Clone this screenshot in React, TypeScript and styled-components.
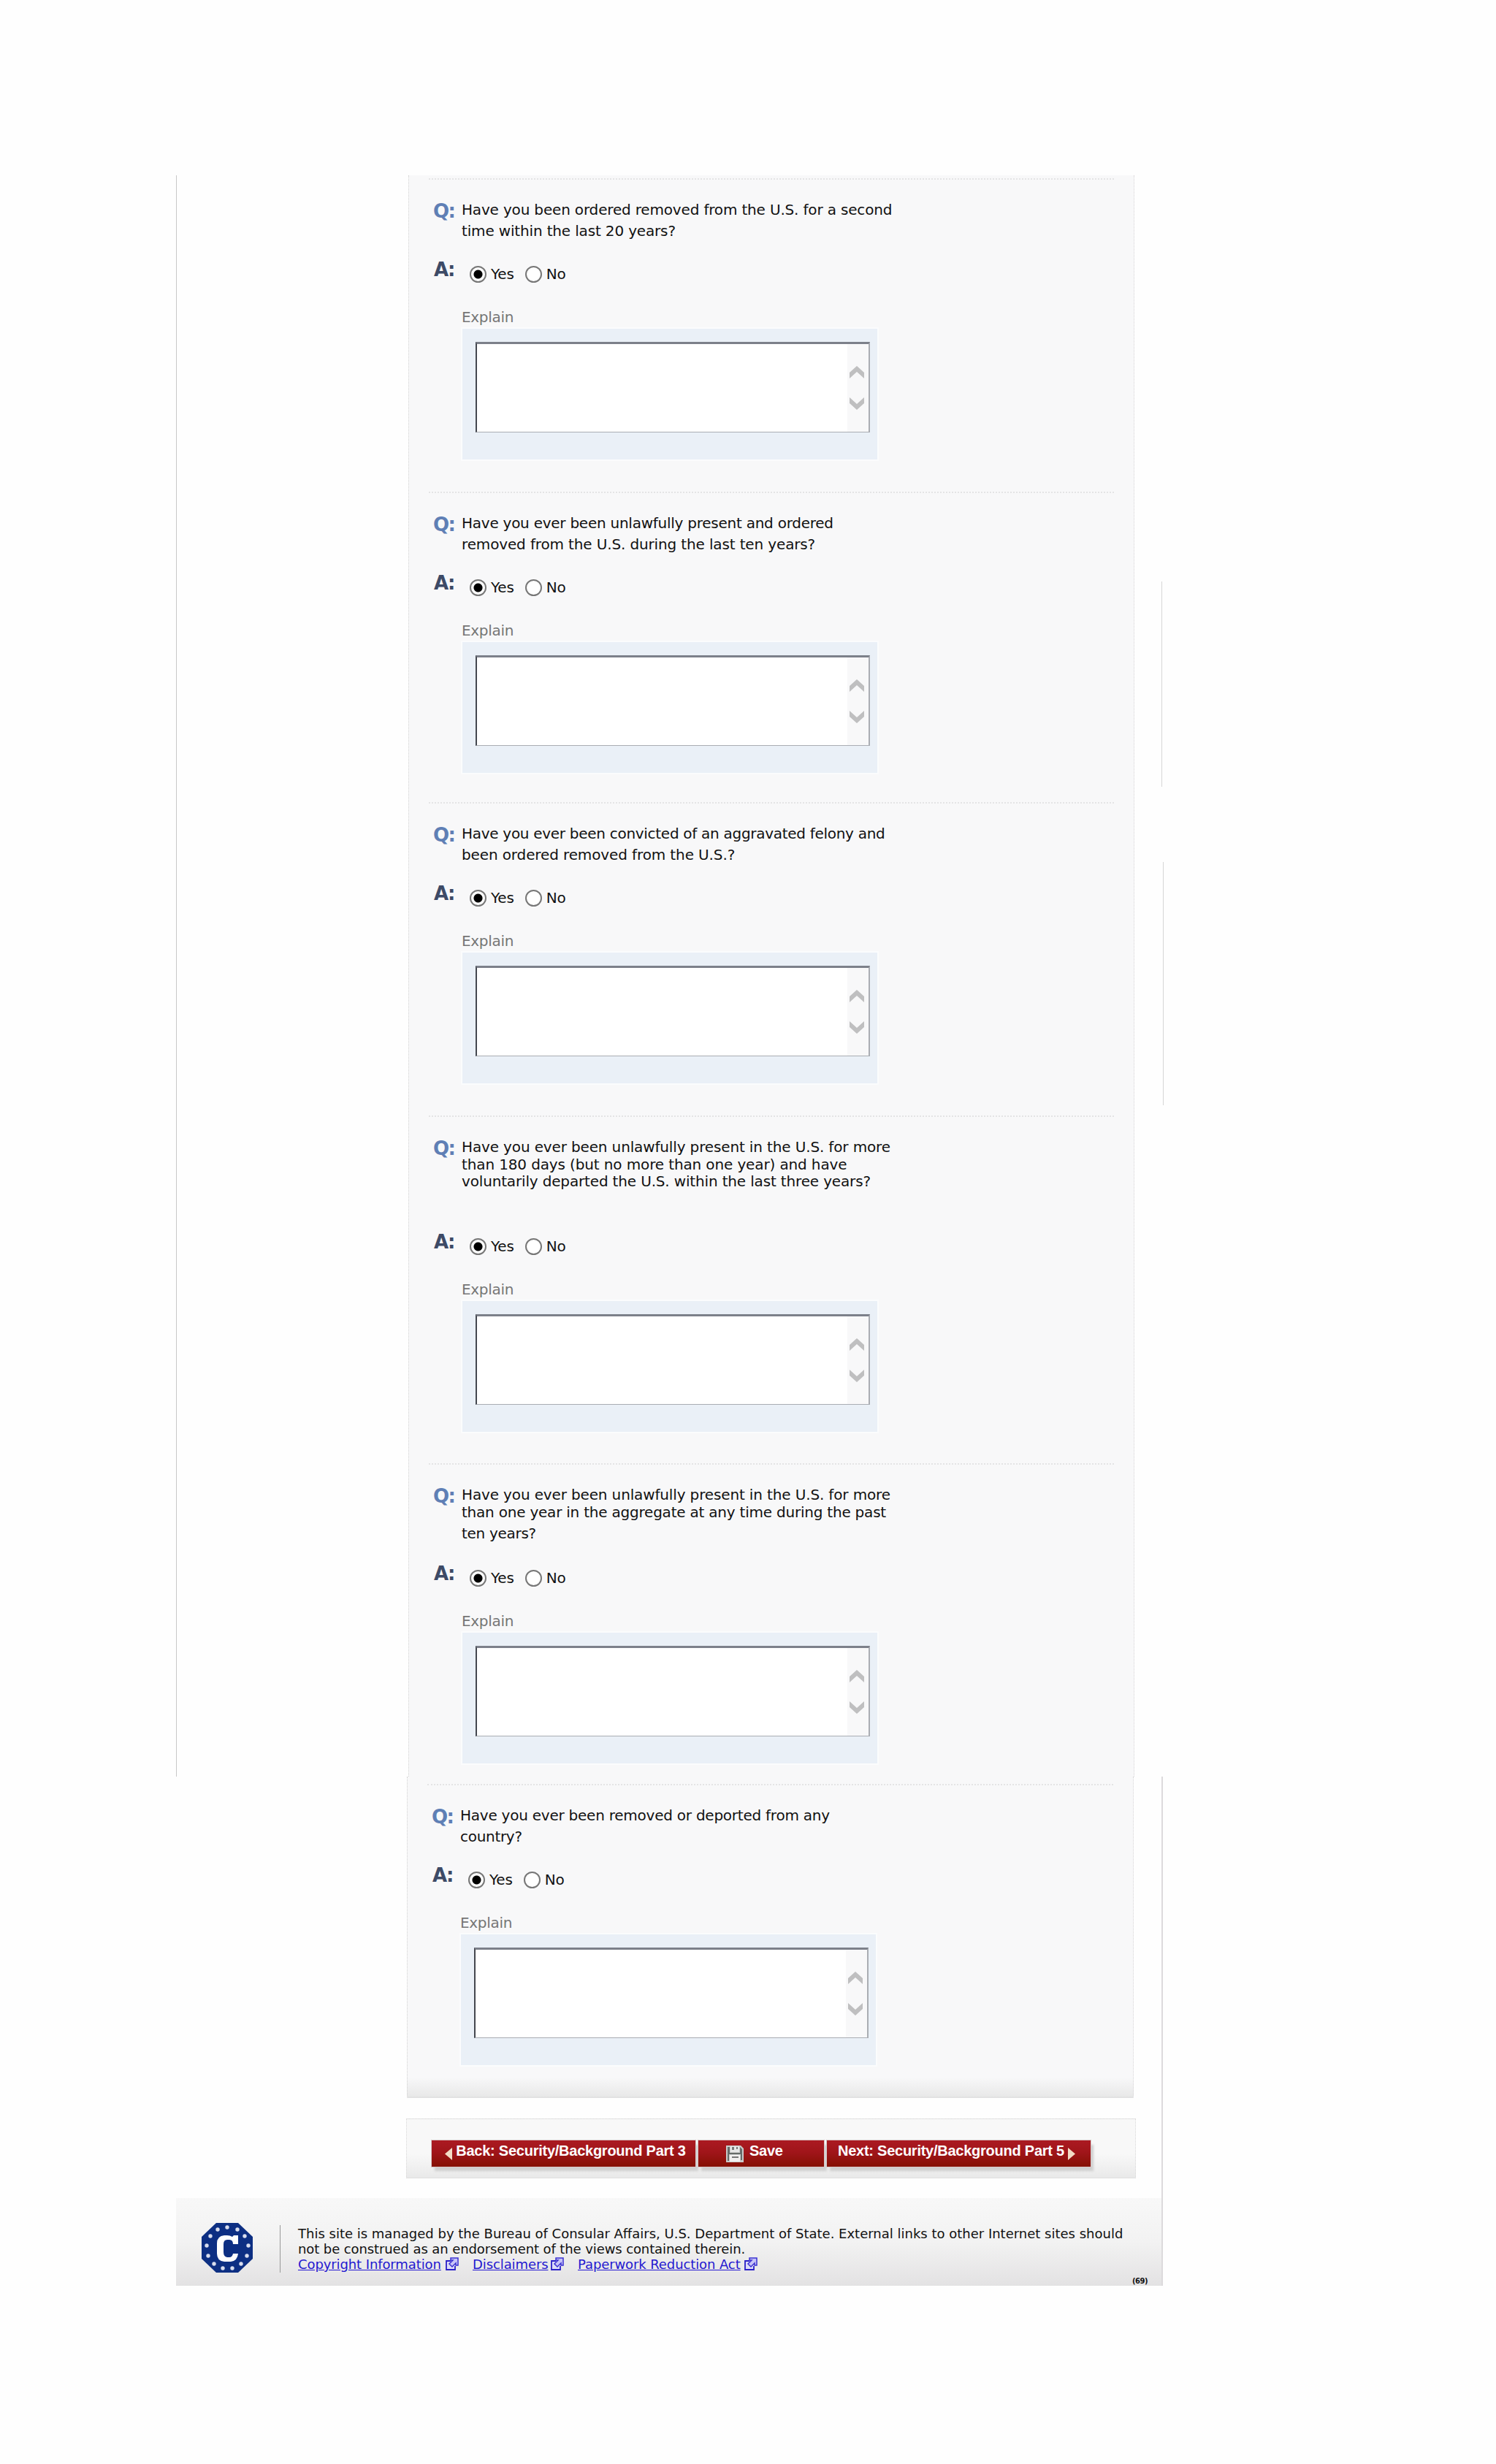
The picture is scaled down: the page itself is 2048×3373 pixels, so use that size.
import { Fragment, useState } from 'react';
import styled, { createGlobalStyle } from 'styled-components';

const GlobalStyle = createGlobalStyle`
  * {
    box-sizing: border-box;
  }

  body {
    margin: 0;
    background: #fff;
    color: #111;
    font-family: Verdana, "DejaVu Sans", sans-serif;
  }
`;

//#region Page
const Page = styled.div`
  width: 2048px;
  height: 3373px;
  padding-top: 240px;
  background: #fefefe;
  overflow: hidden;
`;

const Upper = styled.div`
  display: flex;
  height: 2192px;
  margin-left: 241px;
  border-left: 1px solid #c8c8c8;
`;

const Lower = styled.div`
  display: flex;
  flex-direction: column;
  width: 1351px;
  height: 697px;
  margin-left: 241px;
  border-right: 2px solid #dcdadc;
`;

const Rail = styled.div`
  display: flex;
  flex-direction: column;
  width: 3px;
  margin-left: 37px;
`;

const RailLine = styled.div<{ $top: number; $height: number; $shift?: number }>`
  width: 1px;
  height: ${(p) => p.$height}px;
  margin-top: ${(p) => p.$top}px;
  margin-left: ${(p) => p.$shift || 0}px;
  background: #d6d6d6;
`;

const Panel = styled.div<{ $left: number; $last?: boolean }>`
  flex: none;
  width: ${(p) => (p.$last ? 995 : 994)}px;
  height: ${(p) => (p.$last ? '440px' : 'auto')};
  margin-left: ${(p) => p.$left}px;
  padding: ${(p) => (p.$last ? '10px' : '4px')} 27px 0;
  border-left: 1px dotted #d2d2d2;
  border-right: 1px dotted #d8d6d8;
  border-bottom: ${(p) => (p.$last ? '2px solid #e2e2e2' : 'none')};
  background: ${(p) => (p.$last ? 'linear-gradient(#f8f8f9 94%, #e8e8e8)' : '#f8f8f9')};
`;
//#endregion

//#region Question
const Section = styled.section<{ $height: number }>`
  height: ${(p) => p.$height}px;
  padding-left: 6px;
  border-top: 2px dotted #e4e4e5;
`;

const QuestionRow = styled.div<{ $height: number }>`
  display: flex;
  height: ${(p) => p.$height}px;
  padding-top: 28px;
`;

const Mark = styled.div<{ $answer?: boolean }>`
  width: 39px;
  padding-left: ${(p) => (p.$answer ? 1 : 0)}px;
  color: ${(p) => (p.$answer ? '#3d4a66' : '#5f7fb5')};
  font-family: "DejaVu Sans", sans-serif;
  font-size: 26px;
  font-weight: bold;
  line-height: 30px;
  letter-spacing: -1.6px;
`;

const QuestionText = styled.div`
  padding-top: 1px;
  font-size: 20px;
  white-space: nowrap;
`;

const QuestionLine = styled.div<{ $height: number; $spacing: number }>`
  height: ${(p) => p.$height}px;
  line-height: 24px;
  letter-spacing: ${(p) => p.$spacing}px;
`;

const AnswerRow = styled.div`
  display: flex;
  height: 73px;
`;

const Option = styled.label`
  display: flex;
  align-items: center;
  height: 24px;
  margin: 9px 15px 0 0;
  font-size: 20px;
  letter-spacing: -0.2px;
`;

const Options = styled.div`
  display: flex;
  padding-left: 11px;
`;

const Radio = styled.input`
  appearance: none;
  width: 23px;
  height: 23px;
  margin: 0 6px 0 0;
  border: 2px solid #777;
  border-radius: 50%;
  background: #fff;

  &:checked {
    background: radial-gradient(circle, #000 5.5px, #fff 6.5px);
  }
`;

const Explain = styled.div`
  margin-left: 39px;
`;

const ExplainLabel = styled.div`
  height: 23px;
  color: #767676;
  font-size: 20px;
  line-height: 15px;
  letter-spacing: -0.3px;
`;

const ExplainBox = styled.div`
  width: 568px;
  height: 179px;
  margin-left: 1px;
  padding: 18px 0 0 18px;
  background: #eaf0f7;
  box-shadow: 0 0 0 2px #fbfcfd;
`;

const Field = styled.div`
  display: flex;
  width: 540px;
  height: 124px;
  border: 1px solid #aaadb3;
  border-top: 3px solid #7c808a;
  border-left: 2px solid #44474f;
  border-right-width: 2px;
  background: #fff;
`;

const TextArea = styled.textarea`
  flex: 1;
  border: none;
  outline: none;
  resize: none;
  background: transparent;
  font: inherit;
`;

const Scroller = styled.div`
  width: 29px;
  background: #f8f8f9;
`;
//#endregion

//#region Buttons
const ButtonBar = styled.div`
  display: flex;
  gap: 4px;
  width: 999px;
  height: 82px;
  margin: 28px 0 0 315px;
  padding: 29px 0 0 34px;
  border: 1px dotted #d8d8d8;
  border-bottom: 1px solid #e0e0e0;
  background: linear-gradient(#f8f8f8 60%, #e9e9e9);
`;

const NavButton = styled.button<{ $width: number; $pad: number }>`
  display: flex;
  align-items: center;
  width: ${(p) => p.$width}px;
  height: 36px;
  padding: 0 0 0 ${(p) => p.$pad}px;
  border: none;
  background: linear-gradient(#ab1a22, #a0151a 45%, #851003);
  box-shadow: 0 0 0 1px #d9c9c9, 4px 6px 3px #cfcfcf;
  color: #fff;
  font-family: Arial, "Liberation Sans", sans-serif;
  font-size: 20px;
  font-weight: bold;
  white-space: nowrap;
`;

const ButtonText = styled.span`
  padding-bottom: 8px;
  letter-spacing: -0.25px;
`;
//#endregion

//#region Footer
const Footer = styled.footer`
  display: flex;
  height: 120px;
  margin-top: 27px;
  padding-left: 35px;
  background: linear-gradient(#f8f8f8, #f2f2f2 50%, #e3e2e3);
`;

const FooterText = styled.div`
  width: 1141px;
  height: 65px;
  margin: 37px 0 0 37px;
  padding: 1px 0 0 24px;
  border-left: 1px solid #999;
  font-size: 18px;
  line-height: 21px;
  white-space: nowrap;
`;

const FooterLine = styled.div<{ $spacing: number }>`
  letter-spacing: ${(p) => p.$spacing}px;
`;

const Links = styled.div`
  display: flex;
`;

const FooterLink = styled.a<{ $width: number }>`
  width: ${(p) => p.$width}px;
  color: #2418d0;
  letter-spacing: -0.1px;
  text-decoration: underline;
`;

const PageCode = styled.div`
  align-self: flex-end;
  margin-left: 26px;
  font-size: 10px;
  font-weight: bold;
  line-height: 12px;
  letter-spacing: -0.5px;
`;
//#endregion

//#region Icons
const Chevrons = () => (
  <svg width="29" height="120" viewBox="0 0 29 120">
    <path d="M3 39 L13 30 L23 39 V47 L13 38 L3 47Z M3 73 L13 82 L23 73 V81 L13 90 L3 81Z" fill="#bfbfc0" />
  </svg>
);

const ArrowSvg = styled.svg`
  flex: none;
  margin-top: 1px;
`;

const Arrow = ({ right = false }) => (
  <ArrowSvg width="10" height="17" viewBox="0 0 10 17">
    <path d={right ? 'M0 0 L10 8.5 L0 17Z' : 'M10 0 L0 8.5 L10 17Z'} fill="#f3dcc6" />
  </ArrowSvg>
);

const FloppySvg = styled.svg`
  flex: none;
  margin-right: 8px;
`;

const Floppy = () => (
  <FloppySvg width="24" height="23" viewBox="0 0 24 23">
    <path d="M0 0 H20 L24 4 V23 H0Z" fill="#c9cac9" />
    <path d="M2 2 H5 V10 H19 V2 L22 5 V20 H20 V12 H4 V21 H2Z" fill="#666b69" />
    <path d="M6 1 H18 V9 H6Z" fill="#e6e6e6" />
    <path d="M8 2 H11 V6 H8Z M14 2 H16 V5 H14Z" fill="#777" />
    <path d="M5 13 H19 V22 H5Z" fill="#f1efef" />
    <path d="M8 15 H17 V17 H8Z" fill="#777" />
  </FloppySvg>
);

const SealSvg = styled.svg`
  flex: none;
  margin-top: 34px;
`;

const stars = [
  [35, 6], [49, 9], [59, 18], [64, 31], [62, 45], [54, 56], [42, 62],
  [29, 62], [17, 56], [9, 45], [7, 31], [12, 18], [22, 9],
];

const Seal = () => (
  <SealSvg width="70" height="68" viewBox="0 0 70 68">
    <path d="M20 0 H50 L70 19 V49 L50 68 H20 L0 49 V19Z" fill="#0d2f83" />
    {stars.map(([x, y]) => (
      <circle key={`${x}-${y}`} cx={x} cy={y} r="2.7" fill="#d9deee" />
    ))}
    <path d="M50 29 V17 H44 L42 19 Q39 17 35 17 H31 Q21 18 21 28 V42 Q21 52 31 53 H40 Q49 52 50 42 H43 Q42 47 38 47 H35 Q30 46 30 40 V29 Q30 23 35 23 H38 Q43 23 43 29Z" fill="#fff" />
  </SealSvg>
);

const ExternalSvg = styled.svg`
  flex: none;
  margin: 1px 19px 0 5px;
`;

const External = () => (
  <ExternalSvg width="18" height="18" viewBox="0 0 18 18">
    <path d="M7 5 H1 V17 H13 V12" fill="#dcdcf8" stroke="#2a20c8" strokeWidth="1.8" />
    <path d="M7 1 H17 V11 H14 V8 L9 13 L5 9 L10 4 H7Z" fill="#c7c4f7" stroke="#3a30d2" strokeWidth="1.5" />
  </ExternalSvg>
);
//#endregion

type LineData = { text: string; spacing: number; height?: number };
type QuestionData = { id: string; height: number; top: number; lines: LineData[] };

const questions: QuestionData[] = [
  {
    id: 'second', height: 429, top: 108, lines: [
      { text: 'Have you been ordered removed from the U.S. for a second', spacing: -0.17 },
      { text: 'time within the last 20 years?', spacing: -0.16 },
    ],
  },
  {
    id: 'present', height: 425, top: 108, lines: [
      { text: 'Have you ever been unlawfully present and ordered', spacing: -0.25 },
      { text: 'removed from the U.S. during the last ten years?', spacing: -0.14 },
    ],
  },
  {
    id: 'felony', height: 429, top: 108, lines: [
      { text: 'Have you ever been convicted of an aggravated felony and', spacing: -0.29 },
      { text: 'been ordered removed from the U.S.?', spacing: -0.12 },
    ],
  },
  {
    id: 'days', height: 476, top: 156, lines: [
      { text: 'Have you ever been unlawfully present in the U.S. for more', spacing: -0.14, height: 24 },
      { text: 'than 180 days (but no more than one year) and have', spacing: -0.13, height: 23 },
      { text: 'voluntarily departed the U.S. within the last three years?', spacing: -0.16 },
    ],
  },
  {
    id: 'aggregate', height: 429, top: 134, lines: [
      { text: 'Have you ever been unlawfully present in the U.S. for more', spacing: -0.14, height: 24 },
      { text: 'than one year in the aggregate at any time during the past', spacing: -0.22 },
      { text: 'ten years?', spacing: -0.3 },
    ],
  },
];

const deported: QuestionData = {
  id: 'deported', height: 420, top: 108, lines: [
    { text: 'Have you ever been removed or deported from any', spacing: -0.24 },
    { text: 'country?', spacing: -0.3 },
  ],
};

function Question({ data }: { data: QuestionData }) {
  const [answer, setAnswer] = useState('yes');

  return (
    <Section $height={data.height}>
      <QuestionRow $height={data.top}>
        <Mark>Q:</Mark>
        <QuestionText>
          {data.lines.map((line) => (
            <QuestionLine key={line.text} $height={line.height || 29} $spacing={line.spacing}>{line.text}</QuestionLine>
          ))}
        </QuestionText>
      </QuestionRow>
      <AnswerRow>
        <Mark $answer>A:</Mark>
        <Options>
          <Option>
            <Radio type="radio" name={data.id} checked={answer === 'yes'} onChange={() => setAnswer('yes')} />Yes
          </Option>
          <Option>
            <Radio type="radio" name={data.id} checked={answer === 'no'} onChange={() => setAnswer('no')} />No
          </Option>
        </Options>
      </AnswerRow>
      <Explain>
        <ExplainLabel>Explain</ExplainLabel>
        <ExplainBox>
          <Field>
            <TextArea />
            <Scroller><Chevrons /></Scroller>
          </Field>
        </ExplainBox>
      </Explain>
    </Section>
  );
}

const links = [
  { text: 'Copyright Information', width: 197 },
  { text: 'Disclaimers', width: 102 },
  { text: 'Paperwork Reduction Act', width: 223 },
];

export default function App() {
  return (
    <Page>
      <GlobalStyle />
      <Upper>
        <Panel $left={317}>
          {questions.map((q) => <Question key={q.id} data={q} />)}
        </Panel>
        <Rail>
          <RailLine $top={556} $height={281} />
          <RailLine $top={103} $height={333} $shift={2} />
        </Rail>
      </Upper>
      <Lower>
        <Panel $left={316} $last>
          <Question data={deported} />
        </Panel>
        <ButtonBar>
          <NavButton $width={361} $pad={18}>
            <Arrow /><ButtonText>&nbsp;Back: Security/Background Part 3</ButtonText>
          </NavButton>
          <NavButton $width={172} $pad={38}>
            <Floppy /><ButtonText>Save</ButtonText>
          </NavButton>
          <NavButton $width={361} $pad={15}>
            <ButtonText>Next: Security/Background Part 5&nbsp;</ButtonText><Arrow right />
          </NavButton>
        </ButtonBar>
        <Footer>
          <Seal />
          <FooterText>
            <FooterLine $spacing={0}>This site is managed by the Bureau of Consular Affairs, U.S. Department of State. External links to other Internet sites should</FooterLine>
            <FooterLine $spacing={-0.1}>not be construed as an endorsement of the views contained therein.</FooterLine>
            <Links>
              {links.map((link) => (
                <Fragment key={link.text}>
                  <FooterLink href="#" $width={link.width}>{link.text}</FooterLink>
                  <External />
                </Fragment>
              ))}
            </Links>
          </FooterText>
          <PageCode>(69)</PageCode>
        </Footer>
      </Lower>
    </Page>
  );
}
